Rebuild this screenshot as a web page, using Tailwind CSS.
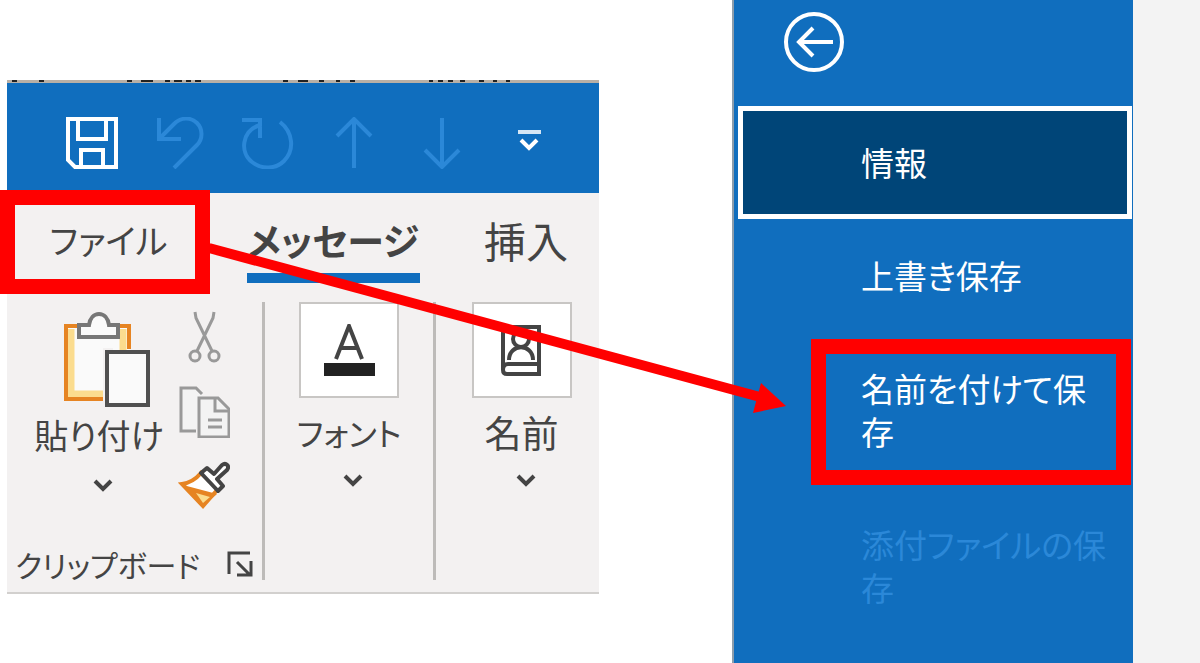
<!DOCTYPE html>
<html lang="ja">
<head>
    <meta charset="UTF-8">
    <meta name="viewport" content="width=device-width, initial-scale=1.0">
    <title>名前を付けて保存</title>
    <script src="https://cdn.jsdelivr.net/npm/@tailwindcss/browser@4"></script>
</head>
<body class="bg-white font-['Noto_Sans_CJK_JP',sans-serif] [font-feature-settings:'palt']">
    <main class="relative flex min-h-screen overflow-hidden">

        <!-- Message window -->
        <section class="w-[61%] pt-20 pl-[7px] pr-[133px]">
            <svg class="block w-full h-[3px] bg-[#b9b0a6]" viewBox="0 0 592 3" preserveAspectRatio="none" fill="none" stroke="#222" stroke-width="2" aria-hidden="true">
                <path d="M5 1h5M32 1h5M120 1h5M134 1h12M158 1h5M167 1h8M179 1h5M188 1h6M276 1h5M291 1h10M312 1h5M329 1h4M343 1h5M422 1h4M431 1h5M441 1h5M453 1h5M472 1h5M486 1h4M499 1h4"/>
            </svg>

            <div class="flex gap-9 h-[110px] pt-[34px] pl-[59px] bg-[#106ebe] text-[#2b88d8]">
                <button class="shrink-0 w-[52px] h-[52px] text-white" aria-label="上書き保存">
                    <svg viewBox="0 0 52 52" fill="none" stroke="currentColor" stroke-width="4">
                        <path d="M2 2h48v48H9L2 43zM12 2v20h28V2M15 50V33h22v17"/>
                    </svg>
                </button>
                <button class="shrink-0 w-[52px] h-[52px]" aria-label="元に戻す" disabled>
                    <svg viewBox="0 0 52 52" fill="none" stroke="currentColor" stroke-width="4">
                        <path d="M5 1v21h22M5 22L20 7C27 0 37 0 43 6C49 12 49 22 43 28L20 51"/>
                    </svg>
                </button>
                <button class="shrink-0 w-[52px] h-[52px]" aria-label="やり直し" disabled>
                    <svg viewBox="0 0 52 52" fill="none" stroke="currentColor" stroke-width="4">
                        <path d="M0 3h18v18M18 3v5C-1 14-2 36 10 45C20 53 34 52 42 44C53 33 51 15 38 5"/>
                    </svg>
                </button>
                <button class="shrink-0 w-[52px] h-[52px]" aria-label="前のアイテム" disabled>
                    <svg viewBox="0 0 52 52" fill="none" stroke="currentColor" stroke-width="4">
                        <path d="M24 51V3M7 19L24 2l17 17"/>
                    </svg>
                </button>
                <button class="shrink-0 w-[52px] h-[52px]" aria-label="次のアイテム" disabled>
                    <svg viewBox="0 0 52 52" fill="none" stroke="currentColor" stroke-width="4">
                        <path d="M24 1v48M7 33l17 17l17-17"/>
                    </svg>
                </button>
                <button class="shrink-0 w-[52px] h-[52px] text-white" aria-label="クイック アクセス ツール バーのユーザー設定">
                    <svg viewBox="0 0 52 52" fill="none" stroke="currentColor" stroke-width="4">
                        <path d="M12 15h23" stroke="#d5e6f5"/><path d="M15 23l8 8l8-8"/>
                    </svg>
                </button>
            </div>

            <div class="bg-[#f3f1f1] border-b-2 border-[#d2d0ce] text-[#444] pb-3">
                <nav class="flex h-[109px] leading-[60px] whitespace-nowrap">
                    <button class="relative w-[203px] h-[90px] pt-[17px] pb-[13px] text-[34px]">ファイル
                        <span class="absolute -left-[7px] -top-[3px] w-[210px] h-[104px] border-[15px] border-[#ff0000]"></span>
                    </button>
                    <button class="w-[173px] h-[90px] ml-[37px] pt-[17px] pb-[3px] border-b-[10px] border-[#106ebe] text-[37px] font-bold">メッセージ</button>
                    <button class="h-[90px] ml-16 pt-[17px] pb-[13px] text-[42px]">挿入</button>
                </nav>

                <div class="flex h-[278px] leading-[48px] whitespace-nowrap">
                    <div class="flex flex-col justify-between w-[258px] border-r-3 border-[#bdbbb9]">
                        <div class="flex pl-[25px] pt-[9px]">
                            <button class="flex flex-col items-center w-[134px]">
                                <svg class="w-[86px] h-24 ml-[16px]" viewBox="0 0 86 96" fill="none" aria-hidden="true">
                                    <path d="M2 16h64v72H2z" fill="#fafafa"/>
                                    <path d="M39 83H7V18M59 18v21" stroke="#fbdc8e" stroke-width="7"/>
                                    <path d="M39 88H2V15h13M53 15h12v23" stroke="#e68422" stroke-width="4"/>
                                    <path d="M15 26V14h10c1-7 5-11 10-11s9 4 10 11h9v12z" fill="#fafafa" stroke="#777" stroke-width="4"/>
                                    <path d="M39 37h10v59H39z" fill="#f3f1f1"/>
                                    <path d="M43 41h41v53H43z" fill="#fafafa" stroke="#505050" stroke-width="4"/>
                                </svg>
                                <span class="mt-1 text-[34px]">貼り付け</span>
                                <svg class="w-5 h-5 mt-4 ml-[8px]" viewBox="0 0 20 20" fill="none" stroke="#444" stroke-width="4" aria-hidden="true"><path d="M2 6l8 8l8-8"/></svg>
                            </button>
                            <div class="flex flex-col gap-[23px] ml-3">
                                <button class="w-[52px] h-[52px]" aria-label="切り取り" disabled>
                                    <svg viewBox="0 0 52 52" fill="none" stroke="#999" stroke-width="3">
                                        <path d="M17 1l1 6l16 33M36 1l-1 6L19 40"/>
                                        <circle cx="17" cy="45" r="5"/><circle cx="36" cy="45" r="5"/>
                                    </svg>
                                </button>
                                <button class="w-[52px] h-[52px]" aria-label="コピー" disabled>
                                    <svg viewBox="0 0 52 52" fill="#f3f3f3" stroke="#999" stroke-width="3">
                                        <path d="M18 45H3V2h15l6 6"/><path d="M21 12h19l11 11v28H21z"/>
                                        <path d="M37 12v13h13M30 34h14M30 41h14" fill="none"/>
                                    </svg>
                                </button>
                                <button class="w-[52px] h-[52px]" aria-label="書式のコピー/貼り付け">
                                    <svg viewBox="0 0 52 52" fill="none" stroke-width="4">
                                        <path d="M23 12C18 18 11 22 4 23l21 22l15-17z" fill="#fff" stroke="#e68422"/>
                                        <path d="M5 24l34 9L24 46z" fill="#e68422"/>
                                        <path d="M18 32l14 4l-7 6z" fill="#fbdc8e"/>
                                        <path d="M23 12l6-5l7 6l8-9c4-3 8 1 5 5L39 18l6 7l-5 5z" fill="#fff" stroke="#444" stroke-linejoin="round"/>
                                    </svg>
                                </button>
                            </div>
                        </div>
                        <div class="flex items-center justify-between pl-2 pr-[9px] -mb-2">
                            <span class="text-[30px]">クリップボード</span>
                            <button class="w-[26px] h-[26px]" aria-label="クリップボードのオプション">
                                <svg viewBox="0 0 26 26" fill="none" stroke="#444" stroke-width="3">
                                    <path d="M2 23V2h21M10 11l13 13M10 24h14V10"/>
                                </svg>
                            </button>
                        </div>
                    </div>

                    <div class="w-[171px] border-r-3 border-[#bdbbb9]">
                        <button class="flex flex-col items-center w-full">
                            <span class="flex items-center justify-center w-[100px] h-24 bg-white border-2 border-[#c8c6c4]">
                                <svg class="w-[52px] h-[52px]" viewBox="0 0 52 52" fill="none" aria-hidden="true">
                                    <path d="M13 35L26 2l13 33M18 24h17" stroke="#444" stroke-width="4"/>
                                    <path d="M1 39h51v13H1z" fill="#222"/>
                                </svg>
                            </span>
                            <span class="mt-[10px] text-[32px]">フォント</span>
                            <svg class="w-5 h-5 mt-[14px] ml-[8px]" viewBox="0 0 20 20" fill="none" stroke="#444" stroke-width="4" aria-hidden="true"><path d="M2 6l8 8l8-8"/></svg>
                        </button>
                    </div>

                    <div class="flex-1 pl-2">
                        <button class="flex flex-col items-center w-full">
                            <span class="flex items-center justify-center w-[100px] h-24 bg-white border-2 border-[#c8c6c4]">
                                <svg class="w-[52px] h-[52px]" viewBox="0 0 52 52" fill="none" stroke="#444" stroke-width="4" aria-hidden="true">
                                    <path d="M7 46V3h36v47H11q-4 0-4-4q0-6 5-6h31"/>
                                    <circle cx="25" cy="15" r="8"/><path d="M13 36c0-17 24-17 24 0"/>
                                </svg>
                            </span>
                            <span class="mt-[10px] text-[37px]">名前</span>
                            <svg class="w-5 h-5 mt-[14px] ml-[8px]" viewBox="0 0 20 20" fill="none" stroke="#444" stroke-width="4" aria-hidden="true"><path d="M2 6l8 8l8-8"/></svg>
                        </button>
                    </div>
                </div>
            </div>
        </section>

        <!-- File menu -->
        <aside class="w-[33.4%] bg-[#106ebe] border-l-2 border-[#8c9dac] pl-1 pr-px pt-[11px] text-white text-[33px] leading-[43px]">
            <button class="block w-[62px] h-[62px] ml-[45px] mb-[33px]" aria-label="戻る">
                <svg viewBox="0 0 62 62" fill="none" stroke="currentColor" stroke-width="4">
                    <circle cx="31" cy="31" r="28"/><path d="M50 31H17M30 17L16 31l14 14"/>
                </svg>
            </button>
            <nav>
                <a href="#" class="block bg-[#004578] border-[5px] border-white py-[30px] pl-[118px]">情報</a>
                <a href="#" class="block py-[35px] pl-[123px]">上書き保存</a>
                <a href="#" class="relative block py-[35px] pl-[123px] pr-5">名前を付けて保存
                    <span class="absolute left-[73px] right-px top-[7px] bottom-[3px] border-[15px] border-[#ff0000]"></span>
                </a>
                <a href="#" class="block py-[35px] pl-[123px] pr-5 text-[#2b88d8]" aria-disabled="true">添付ファイルの保存</a>
            </nav>
        </aside>
        <div class="flex-1 bg-[#f3f3f3]"></div>

        <svg class="absolute left-0 top-0 w-full pointer-events-none" viewBox="0 0 1200 663" aria-hidden="true">
            <path d="M209 248L760 397" stroke="#f00" stroke-width="10"/>
            <path d="M761 383l25 23l-33 7z" fill="#f00"/>
        </svg>
    </main>
</body>
</html>
